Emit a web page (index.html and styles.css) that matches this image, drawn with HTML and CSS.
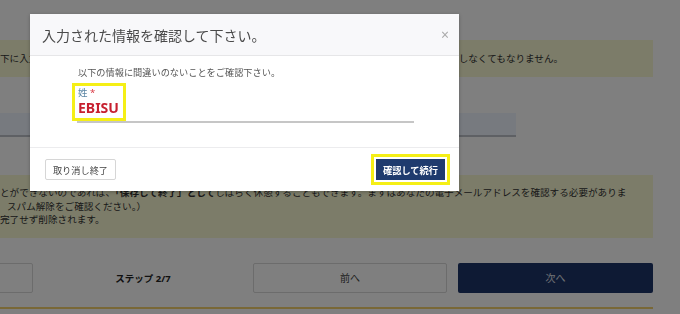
FILE: index.html
```html
<!DOCTYPE html>
<html lang="ja">

<head>
    <meta charset="utf-8">
    <meta name="viewport" content="width=device-width, initial-scale=1.0">
    <title>入力内容の確認</title>
    <link rel="stylesheet" href="styles.css">
</head>

<body>
    <div class="page">
        <div class="notice notice-top">
            下に入力された情報は後からいつでもマイページから変更することができますので、今すぐすべてを完璧にしなくてもなりません。
        </div>

        <div class="field-bar"></div>

        <div class="notice notice-bottom">
            <p>とができないのであれば、<b>「保存して終了」として</b>しばらく休憩することもできます。ますはあなたの電子メールアドレスを確認する必要がありま</p>
            <p class="indent">スパム解除をご確認ください。）</p>
            <p>完了せず削除されます。</p>
        </div>

        <div class="steps">
            <button class="btn btn-light btn-save"></button>
            <div class="step-count">ステップ 2/7</div>
            <button class="btn btn-light">前へ</button>
            <button class="btn btn-dark">次へ</button>
        </div>

        <div class="rule"></div>
    </div>

    <div class="overlay"></div>

    <div class="modal">
        <div class="modal-header">
            <h2>入力された情報を確認して下さい。</h2>
            <span class="close">&times;</span>
        </div>
        <div class="modal-body">
            <p class="lead">以下の情報に間違いのないことをご確認下さい。</p>
            <div class="field">
                <div class="mark">
                    <div class="label">姓 <span class="req">*</span></div>
                    <div class="value">EBISU</div>
                </div>
                <div class="line"></div>
            </div>
        </div>
        <div class="modal-footer">
            <button class="btn-cancel">取り消し終了</button>
            <button class="btn-confirm">確認して続行</button>
        </div>
    </div>
</body>

</html>
```

FILE: styles.css
```css
* {
    margin: 0;
    padding: 0;
    box-sizing: border-box;
    font-family: "Noto Sans", "Noto Sans CJK JP", sans-serif;
}

body {
    width: 680px;
    height: 314px;
    overflow: hidden;
    background: #ffffff;
    position: relative;
}

.page {
    width: 814px;
    margin-left: -161px;
    padding-top: 40px;
    display: flex;
    flex-direction: column;
}

.notice {
    background: #f8f8d2;
    color: #333;
    font-size: 9.6px;
    padding-left: 161px;
    white-space: nowrap;
    overflow: hidden;
}

.notice-top {
    height: 37px;
    line-height: 37px;
}

.notice-bottom {
    margin-top: 38px;
    padding-top: 11px;
    padding-bottom: 11px;
    line-height: 13.5px;
}

.notice-bottom b {
    font-weight: 700;
}

.notice-bottom .indent {
    padding-left: 7px;
}

.field-bar {
    margin-top: 36px;
    width: 677px;
    height: 24px;
    background: #eef4fe;
    border-bottom: 2px solid #bcc0c8;
}

.steps {
    margin-top: 25px;
    display: flex;
    align-items: center;
    height: 30px;
}

.btn {
    height: 30px;
    font-size: 10px;
    border-radius: 2px;
}

.btn-light {
    width: 194px;
    background: #fff;
    border: 1px solid #d8d8d8;
    color: #444;
}

.btn-dark {
    width: 195px;
    margin-left: 11px;
    background: #1d3568;
    border: none;
    color: #e0e4ec;
}

.step-count {
    width: 220px;
    text-align: center;
    font-size: 9.5px;
    font-weight: 700;
    color: #222;
}

.rule {
    margin-top: 14px;
    height: 2px;
    background: #f2d06e;
}

.overlay {
    position: fixed;
    inset: 0;
    background: rgba(0, 0, 0, 0.5);
}

.modal {
    position: fixed;
    left: 30px;
    top: 14px;
    width: 429px;
    background: #fff;
    box-shadow: 0 1px 4px rgba(0, 0, 0, 0.25);
}

.modal-header {
    height: 42px;
    display: flex;
    align-items: center;
    justify-content: space-between;
    padding: 0 10px 0 12px;
    background: #f8f8fa;
    border-bottom: 1px solid #e6e6e8;
}

.modal-header h2 {
    font-size: 14px;
    font-weight: 400;
    color: #4a4a4a;
}

.close {
    font-size: 14px;
    color: #aaa;
}

.modal-body {
    padding: 10px 0 24px 42px;
}

.lead {
    font-size: 9.2px;
    line-height: 14px;
    color: #555;
    padding-left: 6px;
}

.field {
    margin-top: 3px;
}

.mark {
    display: inline-block;
    border: 3px solid #f5ef16;
    padding: 1px 4px 1px 3px;
}

.label {
    font-size: 9.5px;
    line-height: 12px;
    color: #5b86a4;
}

.req {
    color: #d9343f;
}

.value {
    font-size: 14px;
    line-height: 18px;
    font-weight: 700;
    color: #c7202f;
}

.line {
    margin-left: 5px;
    width: 337px;
    height: 2px;
    background: #c6c6c6;
}

.modal-footer {
    height: 44px;
    border-top: 1px solid #ececee;
    display: flex;
    align-items: center;
    justify-content: space-between;
    padding: 0 14px 0 15px;
}

.btn-cancel {
    height: 21px;
    width: 71px;
    font-size: 9.2px;
    color: #444;
    background: #fff;
    border: 1px solid #d6d6d6;
    border-radius: 2px;
}

.btn-confirm {
    height: 21px;
    width: 69px;
    font-size: 9.2px;
    font-weight: 700;
    color: #fff;
    background: #1f3b6e;
    border: none;
    box-shadow: 0 0 0 2px #fff, 0 0 0 5px #f5ef16;
}
```
